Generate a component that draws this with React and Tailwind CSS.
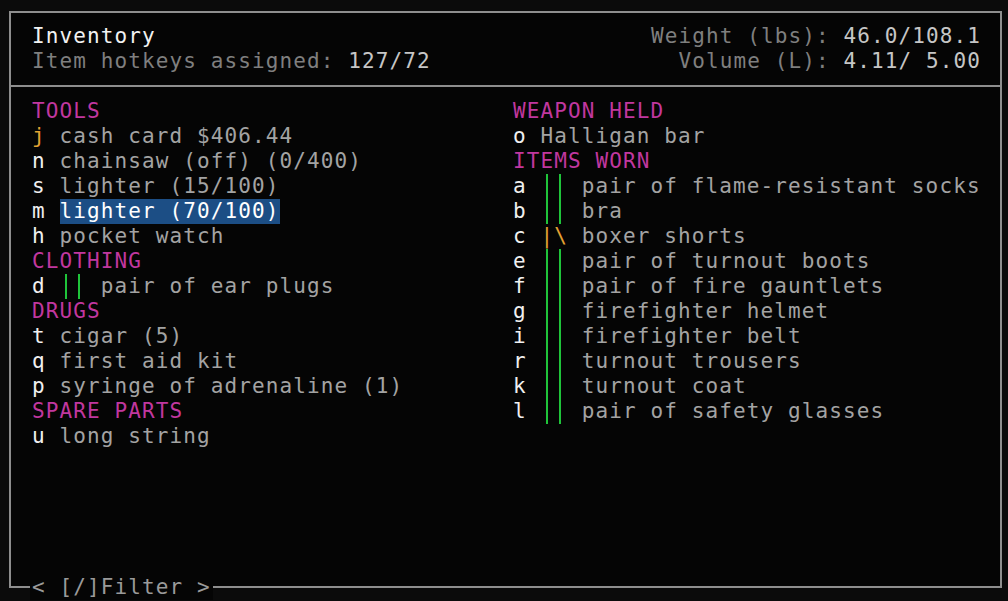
const left = [
  { cat: 'TOOLS' },
  { k: 'j', gold: true, n: 'cash card $406.44' },
  { k: 'n', n: 'chainsaw (off) (0/400)' },
  { k: 's', n: 'lighter (15/100)' },
  { k: 'm', n: 'lighter (70/100)', sel: true },
  { k: 'h', n: 'pocket watch' },
  { cat: 'CLOTHING' },
  { k: 'd', bars: 'gg', n: 'pair of ear plugs' },
  { cat: 'DRUGS' },
  { k: 't', n: 'cigar (5)' },
  { k: 'q', n: 'first aid kit' },
  { k: 'p', n: 'syringe of adrenaline (1)' },
  { cat: 'SPARE PARTS' },
  { k: 'u', n: 'long string' },
];

const right = [
  { cat: 'WEAPON HELD' },
  { k: 'o', n: 'Halligan bar' },
  { cat: 'ITEMS WORN' },
  { k: 'a', bars: 'gg', n: 'pair of flame-resistant socks' },
  { k: 'b', bars: 'gg', n: 'bra' },
  { k: 'c', bars: 'oo', n: 'boxer shorts' },
  { k: 'e', bars: 'gg', n: 'pair of turnout boots' },
  { k: 'f', bars: 'gg', n: 'pair of fire gauntlets' },
  { k: 'g', bars: 'gg', n: 'firefighter helmet' },
  { k: 'i', bars: 'gg', n: 'firefighter belt' },
  { k: 'r', bars: 'gg', n: 'turnout trousers' },
  { k: 'k', bars: 'gg', n: 'turnout coat' },
  { k: 'l', bars: 'gg', n: 'pair of safety glasses' },
];

const GreenBar = () => (
  <span className="inline-flex w-[13.75px] h-[25px] pl-[5px]">
    <span className="w-[2px] h-full bg-[#1fc43a]" />
  </span>
);

const Row = ({ item }) => {
  if (item.cat) {
    return <div className="h-[25px] text-[#c1379f]">{item.cat}</div>;
  }
  return (
    <div className="h-[25px] flex items-center whitespace-pre">
      <span className={item.gold ? 'text-[#e3a233]' : 'text-[#f0f0f0]'}>{item.k} </span>
      {item.bars === 'gg' && (
        <>
          <GreenBar />
          <GreenBar />
          <span> </span>
        </>
      )}
      {item.bars === 'oo' && <span className="text-[#e3a233]">{'|\\ '}</span>}
      <span className={item.sel ? 'bg-[#1c4e85] text-white' : 'text-[#a3a3a3]'}>{item.n}</span>
    </div>
  );
};

export default function App() {
  return (
    <div
      className="w-[1008px] h-[601px] bg-[#0b0b0b] pt-[11px] pl-[9px] overflow-hidden"
      style={{ fontFamily: '"DejaVu Sans Mono", "Liberation Mono", monospace' }}
    >
      <div className="relative w-[993px] h-[577px] border-2 border-[#8e8e8e] bg-[#050505] text-[21px] leading-[25px] tracking-[1.11px]">
        {/* header */}
        <div className="flex justify-between pt-[11px] pl-[21px] pr-[19px]">
          <div>
            <div className="h-[25px] text-[#f2f2f2]">Inventory</div>
            <div className="h-[25px] whitespace-pre">
              <span className="text-[#7f7f7f]">Item hotkeys assigned: </span>
              <span className="text-[#c6c6c6]">127/72</span>
            </div>
          </div>
          <div className="text-right whitespace-pre">
            <div className="h-[25px]">
              <span className="text-[#7f7f7f]">Weight (lbs): </span>
              <span className="text-[#c6c6c6]">46.0/108.1</span>
            </div>
            <div className="h-[25px]">
              <span className="text-[#7f7f7f]">Volume (L): </span>
              <span className="text-[#c6c6c6]">4.11/ 5.00</span>
            </div>
          </div>
        </div>

        <div className="mt-[11px] h-[2px] bg-[#8e8e8e]" />

        {/* lists */}
        <div className="grid grid-cols-[502px_1fr] mt-[12px]">
          <div className="pl-[21px]">
            {left.map((it, i) => (
              <Row key={i} item={it} />
            ))}
          </div>
          <div>
            {right.map((it, i) => (
              <Row key={i} item={it} />
            ))}
          </div>
        </div>

        {/* filter label on bottom border */}
        <div className="absolute left-[19px] bottom-[-14px] h-[25px] px-[2px] bg-[#050505] text-[#9a9a9a] whitespace-pre">
          {'< [/]Filter >'}
        </div>
      </div>
    </div>
  );
}
